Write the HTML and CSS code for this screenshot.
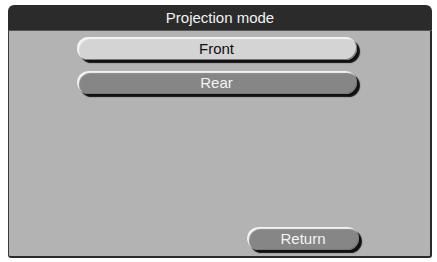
FILE: index.html
```html
<!DOCTYPE html>
<html>
<head>
<meta charset="utf-8">
<link rel="stylesheet" href="styles.css">
</head>
<body>
<div class="window">
  <div class="title">Projection mode</div>
  <div class="content">
    <div class="options">
      <div class="pill light">Front</div>
      <div class="pill dark">Rear</div>
    </div>
    <div class="footer">
      <div class="pill dark ret">Return</div>
    </div>
  </div>
</div>
</body>
</html>
```
FILE: styles.css
```css
html, body {
  margin: 0;
  padding: 0;
  background: #ffffff;
}
body {
  width: 437px;
  height: 262px;
  font-family: "Liberation Sans", Arial, sans-serif;
}
.window {
  position: relative;
  top: 5px;
  left: 8px;
  width: 424px;
  height: 253px;
  display: flex;
  flex-direction: column;
}
.title {
  height: 25px;
  background: #2b2b2b;
  border-radius: 6px 6px 0 0;
  color: #f2f2f2;
  font-size: 15px;
  line-height: 25px;
  text-align: center;
  border-bottom: 1px solid #555;
}
.content {
  flex: 1;
  background: #b3b3b3;
  border-left: 1px solid #3a3a3a;
  border-right: 2px solid #2a2a2a;
  border-bottom: 2px solid #2a2a2a;
  border-radius: 0 0 3px 3px;
  display: flex;
  flex-direction: column;
  justify-content: space-between;
  padding: 6px 0 4px 0;
}
.options {
  display: flex;
  flex-direction: column;
  align-items: center;
  gap: 11px;
}
.pill {
  width: 280px;
  height: 23px;
  border-radius: 12px;
  font-size: 15px;
  line-height: 23px;
  text-align: center;
  box-shadow: 3px 3px 1px #111, inset 2px 2px 1px #f4f4f4, inset -1px -1px 0 #777;
  margin-left: -6px;
}
.light {
  background: #d4d4d4;
  color: #111;
}
.dark {
  background: #868686;
  color: #f4f4f4;
}
.footer {
  display: flex;
  justify-content: flex-end;
  padding-right: 71px;
}
.pill.ret {
  width: 112px;
  height: 23px;
  margin-left: 0;
  margin-bottom: 2px;
}
```
